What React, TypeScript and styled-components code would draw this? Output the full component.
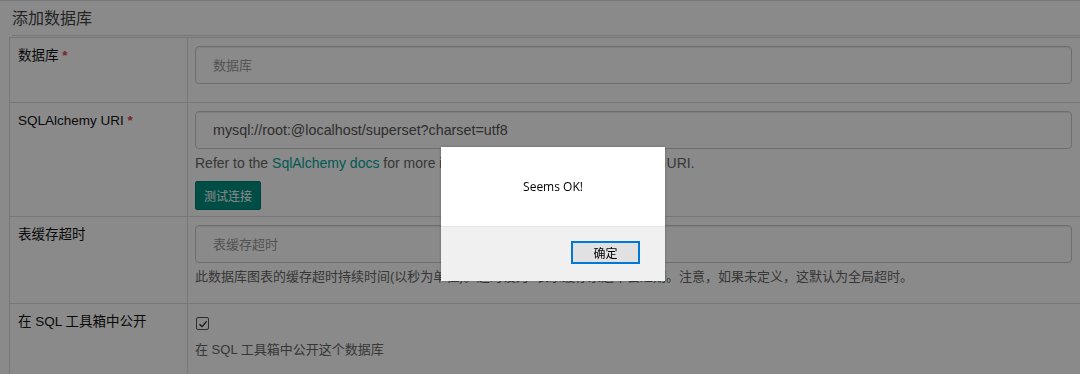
import React from 'react';
import styled, { createGlobalStyle } from 'styled-components';

const GlobalStyle = createGlobalStyle`
  html, body {
    margin: 0;
    padding: 0;
    height: 374px;
    overflow: hidden;
    background: #fff;
    font-family: "Liberation Sans", "Noto Sans CJK SC", Arial, sans-serif;
  }
`;

const App: React.FC = () => {
  return (
    <>
      <GlobalStyle />
      <Page>
        <Title>添加数据库</Title>
        <FormTable>
          <LabelCell>
            数据库 <Required>*</Required>
          </LabelCell>
          <FieldCell $bottom={18}>
            <Input placeholder="数据库" readOnly />
          </FieldCell>

          <LabelCell>
            SQLAlchemy URI <Required>*</Required>
          </LabelCell>
          <FieldCell $bottom={6}>
            <Input defaultValue="mysql://root:@localhost/superset?charset=utf8" readOnly />
            <HelpText $latin>
              Refer to the <DocLink>SqlAlchemy docs</DocLink> for more information on how to structure your URI.
            </HelpText>
            <TestButton>测试连接</TestButton>
          </FieldCell>

          <LabelCell>表缓存超时</LabelCell>
          <FieldCell $bottom={16}>
            <Input placeholder="表缓存超时" readOnly />
            <HelpText>
              此数据库图表的缓存超时持续时间(以秒为单位)。超时设为0表示缓存永远不会过期。注意，如果未定义，这默认为全局超时。
            </HelpText>
          </FieldCell>

          <LabelCell>在 SQL 工具箱中公开</LabelCell>
          <FieldCell $bottom={20}>
            <CheckBox>
              <svg width="10" height="10" viewBox="0 0 10 10">
                <path d="M1.5 5.2 L4 7.6 L8.6 2.4" fill="none" stroke="#222" strokeWidth="1.3" />
              </svg>
            </CheckBox>
            <CheckText>在 SQL 工具箱中公开这个数据库</CheckText>
          </FieldCell>
        </FormTable>
      </Page>

      <Dim />

      <AlertBox>
        <AlertBody>Seems OK!</AlertBody>
        <AlertFooter>
          <OkButton>确定</OkButton>
        </AlertFooter>
      </AlertBox>
    </>
  );
};

const Page = styled.div`
  border-top: 1px solid #ddd;
  padding-left: 9px;
`;

const Title = styled.div`
  margin-left: 3px;
  height: 34px;
  line-height: 35px;
  font-size: 16px;
  color: #444;
  border-bottom: 1px solid #ddd;
`;

const FormTable = styled.div`
  display: grid;
  grid-template-columns: 178px 1fr;
  margin-top: 1px;
  border-left: 1px solid #ddd;
`;

const LabelCell = styled.div`
  border-top: 1px solid #ddd;
  border-right: 1px solid #ddd;
  padding: 8px 8px;
  font-size: 13.5px;
  line-height: 20px;
  color: #111;
`;

const Required = styled.span`
  color: #e04343;
  font-weight: bold;
`;

const FieldCell = styled.div<{ $bottom: number }>`
  border-top: 1px solid #ddd;
  padding: 8px 8px ${p => p.$bottom}px 7px;
  display: flex;
  flex-direction: column;
  align-items: flex-start;
`;

const Input = styled.input`
  box-sizing: border-box;
  width: 100%;
  height: 38px;
  padding: 0 17px;
  border: 1px solid #ccc;
  border-radius: 4px;
  box-shadow: inset 0 1px 1px rgba(0, 0, 0, 0.08);
  background: #fff;
  font-family: "Liberation Sans", "Noto Sans CJK SC", Arial, sans-serif;
  font-size: 14.3px;
  color: #555;
  outline: none;

  &::placeholder {
    color: #999;
    font-size: 13px;
  }
`;

const HelpText = styled.div<{ $latin?: boolean }>`
  margin-top: 4px;
  font-size: ${p => (p.$latin ? '14px' : '13px')};
  line-height: 20px;
  color: #666;
`;

const DocLink = styled.a`
  color: #00a699;
  text-decoration: none;
`;

const TestButton = styled.button`
  margin-top: 8px;
  height: 29px;
  width: 66px;
  padding: 0;
  border: 1px solid #007f75;
  border-radius: 2px;
  background: #008e82;
  color: #fff;
  font-family: "Liberation Sans", "Noto Sans CJK SC", sans-serif;
  font-size: 12px;
`;

const CheckBox = styled.span`
  margin-top: 5px;
  margin-left: 1px;
  width: 11px;
  height: 11px;
  border: 1px solid #555;
  border-radius: 2px;
  display: flex;
  align-items: center;
  justify-content: center;
`;

const CheckText = styled.div`
  margin-top: 10px;
  font-size: 13px;
  line-height: 20px;
  color: #666;
`;

const Dim = styled.div`
  position: fixed;
  inset: 0;
  background: rgba(0, 0, 0, 0.46);
`;

const AlertBox = styled.div`
  position: fixed;
  left: 441px;
  top: 147px;
  width: 224px;
  height: 134px;
  display: flex;
  flex-direction: column;
  background: #fff;
  box-shadow: 0 0 3px rgba(0, 0, 0, 0.25);
  font-family: "Open Sans", "Noto Sans", "Noto Sans CJK SC", sans-serif;
`;

const AlertBody = styled.div`
  height: 79px;
  display: flex;
  align-items: center;
  justify-content: center;
  font-size: 12px;
  color: #000;
`;

const AlertFooter = styled.div`
  flex: 1;
  background: #f0f0f0;
  border-top: 1px solid #e6e6e6;
  display: flex;
  justify-content: flex-end;
  align-items: flex-start;
  padding: 14px 25px 0 0;
`;

const OkButton = styled.button`
  box-sizing: border-box;
  width: 69px;
  height: 23px;
  border: 2px solid #0078d7;
  background: #e1e1e1;
  font-family: "Noto Sans CJK SC", sans-serif;
  font-size: 12px;
  color: #000;
  padding: 0;
`;

export default App;
